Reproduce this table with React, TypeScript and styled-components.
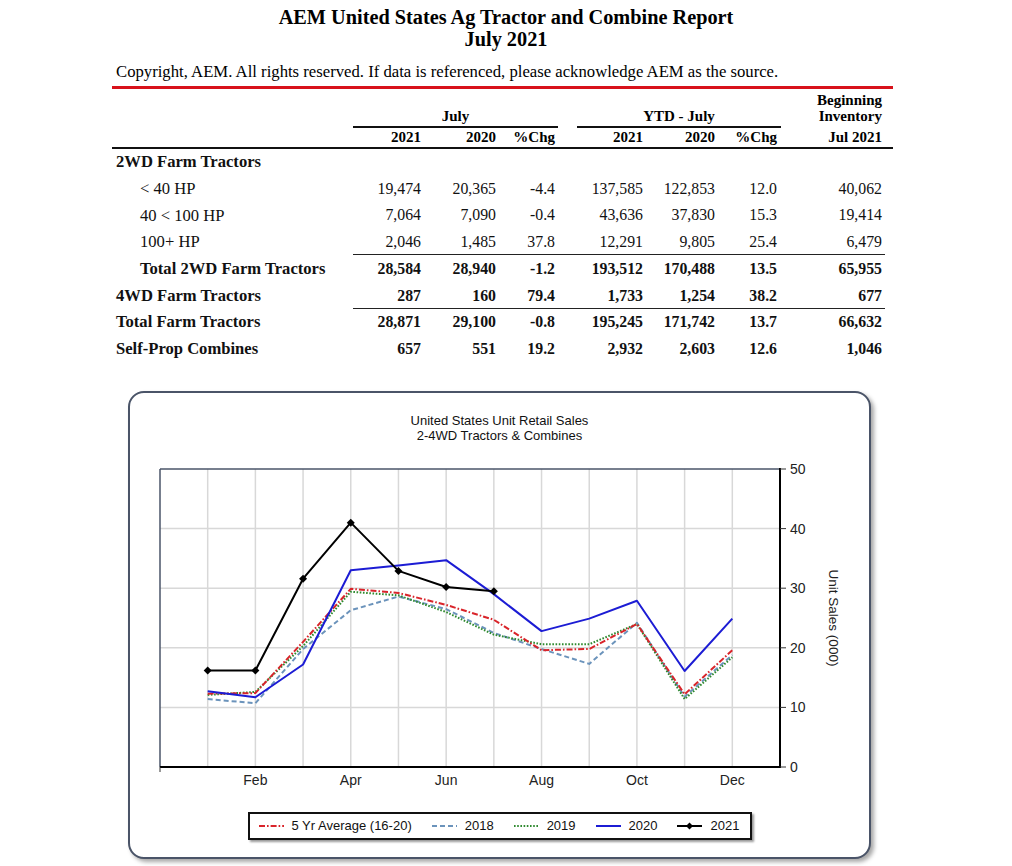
import React from "react";
import styled, { createGlobalStyle } from "styled-components";

const GlobalStyle = createGlobalStyle`
  html, body { margin: 0; padding: 0; background: #ffffff; }
  body { font-family: "Liberation Serif", "Times New Roman", serif; color: #111; }
`;

const Page = styled.div`
  width: 1012px;
  min-height: 866px;
  background: #fff;
  padding-top: 6px;
  box-sizing: border-box;
`;

const Title = styled.h1`
  margin: 0;
  text-align: center;
  font-family: "Liberation Serif", "Times New Roman", serif;
  font-weight: bold;
  font-size: 20.3px;
  line-height: 22px;
  color: #000;
`;

const Report = styled.div`
  margin-left: 112px;
  width: 781px;
`;

const Copyright = styled.p`
  margin: 13px 0 0 0;
  padding-left: 4px;
  font-size: 16.7px;
  line-height: 18px;
  color: #000;
  white-space: nowrap;
`;

const RedRule = styled.div`
  margin-top: 5px;
  height: 3px;
  background: #d8121b;
`;

const COLS = "241px 68px 75px 62px 19px 66px 72px 66px 104px 8px";
const VCOLS = "68px 75px 62px 19px 66px 72px 66px 104px";

const Header = styled.div`
  display: grid;
  grid-template-columns: ${COLS};
  grid-template-rows: auto auto;
  margin-top: 3px;
  border-bottom: 2px solid #111;
  font-weight: bold;
  font-size: 15px;
  line-height: 16px;
  color: #000;
`;

const GroupHead = styled.div<{ $col: string }>`
  grid-row: 1;
  grid-column: ${(p) => p.$col};
  align-self: end;
  text-align: center;
  padding-bottom: 2px;
  border-bottom: 2px solid #111;
`;

const InvHead = styled.div`
  grid-row: 1;
  grid-column: 9;
  align-self: end;
  text-align: right;
  padding-right: 3px;
  padding-bottom: 4px;
`;

const ColHead = styled.div<{ $col: number; $pad?: number }>`
  grid-row: 2;
  grid-column: ${(p) => p.$col};
  text-align: right;
  padding-right: ${(p) => p.$pad ?? 0}px;
  padding-top: 1px;
  padding-bottom: 2px;
`;

const Row = styled.div<{ $bold?: boolean }>`
  display: flex;
  height: 26.7px;
  font-weight: ${(p) => (p.$bold ? "bold" : "normal")};
`;

const Label = styled.div<{ $indent?: boolean; $bold?: boolean }>`
  width: 241px;
  flex: none;
  box-sizing: border-box;
  padding-left: ${(p) => (p.$indent ? 28 : 4)}px;
  font-size: 16.6px;
  font-weight: ${(p) => (p.$bold ? "bold" : "normal")};
  display: flex;
  align-items: center;
  white-space: nowrap;
`;

const Values = styled.div<{ $rule?: boolean }>`
  display: grid;
  grid-template-columns: ${VCOLS};
  width: 532px;
  box-sizing: border-box;
  border-top: ${(p) => (p.$rule ? "1.5px solid #222" : "1.5px solid transparent")};
  margin-top: -1.5px;
  font-size: 15.8px;
`;

const Cell = styled.div<{ $pad?: number }>`
  display: flex;
  align-items: center;
  justify-content: flex-end;
  padding-right: ${(p) => p.$pad ?? 0}px;
  white-space: nowrap;
`;

const ChartCard = styled.div`
  margin: 28px 0 0 128px;
  width: 743px;
  height: 468px;
  box-sizing: border-box;
  border: 2px solid #4a5468;
  border-radius: 16px;
  background: #fff;
  box-shadow: 3px 3px 4px rgba(0, 0, 0, 0.35);
  padding-top: 20px;
  display: flex;
  flex-direction: column;
  align-items: center;
  font-family: "Liberation Sans", Arial, sans-serif;
`;

const ChartTitle = styled.div`
  text-align: center;
  font-size: 13px;
  line-height: 15px;
  color: #111;
`;

const PlotSvg = styled.svg`
  display: block;
  align-self: flex-start;
  margin-top: 2px;
`;

const Legend = styled.div`
  margin-top: 17px;
  width: 504px;
  height: 28px;
  box-sizing: border-box;
  border: 2px solid #111;
  box-shadow: 2px 2px 2px rgba(0, 0, 0, 0.4);
  display: flex;
  align-items: center;
  padding-left: 9px;
  gap: 20px;
  font-size: 13px;
  color: #111;
`;

const LegendItem = styled.div`
  display: flex;
  align-items: center;
  gap: 8px;
  white-space: nowrap;
`;

type RowData = {
  label: string;
  indent?: boolean;
  bold?: boolean;
  rule?: boolean;
  vals: string[];
};

const rows: RowData[] = [
  { label: "2WD Farm Tractors", bold: true, vals: [] },
  { label: "< 40 HP", indent: true, vals: ["19,474", "20,365", "-4.4", "137,585", "122,853", "12.0", "40,062"] },
  { label: "40 < 100 HP", indent: true, vals: ["7,064", "7,090", "-0.4", "43,636", "37,830", "15.3", "19,414"] },
  { label: "100+ HP", indent: true, vals: ["2,046", "1,485", "37.8", "12,291", "9,805", "25.4", "6,479"] },
  { label: "Total 2WD Farm Tractors", indent: true, bold: true, rule: true, vals: ["28,584", "28,940", "-1.2", "193,512", "170,488", "13.5", "65,955"] },
  { label: "4WD Farm Tractors", bold: true, vals: ["287", "160", "79.4", "1,733", "1,254", "38.2", "677"] },
  { label: "Total Farm Tractors", bold: true, rule: true, vals: ["28,871", "29,100", "-0.8", "195,245", "171,742", "13.7", "66,632"] },
  { label: "Self-Prop Combines", bold: true, vals: ["657", "551", "19.2", "2,932", "2,603", "12.6", "1,046"] },
];

// Chart geometry (SVG coordinates)
const PL = 30;
const PR = 650;
const PT = 24;
const PB = 322;
const STEP = (PR - PL) / 13;
const xOf = (i: number) => PL + (i + 1) * STEP;
const yOf = (v: number) => PB - (v * (PB - PT)) / 50;

type Series = { name: string; color: string; dash?: string; data: number[]; marker?: boolean };

const series: Series[] = [
  { name: "2018", color: "#6b93bb", dash: "5 3", data: [11.4, 10.7, 19.8, 26.3, 28.6, 26.5, 22.5, 19.8, 17.3, 24.2, 11.8, 18.8] },
  { name: "2019", color: "#2f8a2f", dash: "1.6 1.6", data: [12.1, 12.6, 20.3, 29.4, 28.8, 26.0, 22.2, 20.6, 20.6, 24.0, 11.4, 18.4] },
  { name: "5 Yr Average (16-20)", color: "#d9242a", dash: "6 2 1.6 2", data: [12.3, 12.4, 21.0, 29.9, 29.2, 27.2, 24.7, 19.6, 19.8, 24.0, 12.2, 19.6] },
  { name: "2020", color: "#1c1cd4", data: [12.7, 11.7, 17.2, 33.0, 33.8, 34.7, 29.0, 22.8, 24.9, 27.9, 16.1, 24.9] },
  { name: "2021", color: "#000", data: [16.2, 16.2, 31.6, 41.0, 32.9, 30.2, 29.5], marker: true },
];

const legendOrder = ["5 Yr Average (16-20)", "2018", "2019", "2020", "2021"];

const Diamond = ({ x, y, r = 4 }: { x: number; y: number; r?: number }) => (
  <polygon points={`${x},${y - r} ${x + r},${y} ${x},${y + r} ${x - r},${y}`} fill="#000" />
);

const AXIS_FONT = "Liberation Sans, Arial, sans-serif";

const Plot = () => {
  const months = ["Feb", "Apr", "Jun", "Aug", "Oct", "Dec"];
  return (
    <PlotSvg width={739} height={350} viewBox="0 0 739 350">
      {Array.from({ length: 12 }).map((_, i) => (
        <line key={"v" + i} x1={xOf(i)} y1={PT} x2={xOf(i)} y2={PB} stroke="#d8d8d8" strokeWidth={1.5} />
      ))}
      {[10, 20, 30, 40].map((v) => (
        <line key={"h" + v} x1={PL} y1={yOf(v)} x2={PR} y2={yOf(v)} stroke="#d8d8d8" strokeWidth={1.5} />
      ))}
      <line x1={PL} y1={PT} x2={PR} y2={PT} stroke="#4a5468" strokeWidth={1.5} />
      <line x1={PL} y1={PT} x2={PL} y2={PB} stroke="#4a5468" strokeWidth={1.5} />
      <line x1={PR} y1={PT - 1} x2={PR} y2={PB + 1} stroke="#000" strokeWidth={2} />
      <line x1={PL} y1={PB} x2={PR} y2={PB} stroke="#000" strokeWidth={2} />
      <line x1={PL} y1={PB} x2={PL} y2={PB + 5} stroke="#333" strokeWidth={1} />
      {[0, 10, 20, 30, 40, 50].map((v) => (
        <g key={"t" + v}>
          <line x1={PR} y1={yOf(v)} x2={PR + 6} y2={yOf(v)} stroke="#333" strokeWidth={1} />
          <text x={PR + 10} y={yOf(v) + 5} fontSize={14} fontFamily={AXIS_FONT} fill="#222">
            {v}
          </text>
        </g>
      ))}
      <text
        x={699}
        y={173}
        fontSize={13.5}
        fontFamily={AXIS_FONT}
        fill="#222"
        textAnchor="middle"
        transform="rotate(90 699 173)"
      >
        Unit Sales (000)
      </text>
      {months.map((m, k) => (
        <text key={m} x={xOf(k * 2 + 1)} y={340} fontSize={14} fontFamily={AXIS_FONT} fill="#222" textAnchor="middle">
          {m}
        </text>
      ))}
      {series.map((s) => (
        <g key={s.name}>
          <polyline
            points={s.data.map((v, i) => `${xOf(i)},${yOf(v)}`).join(" ")}
            fill="none"
            stroke={s.color}
            strokeWidth={2}
            strokeDasharray={s.dash}
            strokeLinejoin="round"
          />
          {s.marker && s.data.map((v, i) => <Diamond key={i} x={xOf(i)} y={yOf(v)} />)}
        </g>
      ))}
    </PlotSvg>
  );
};

const Swatch = ({ s }: { s: Series }) => (
  <svg width={25} height={8} viewBox="0 0 25 8">
    <line x1={0} y1={4} x2={25} y2={4} stroke={s.color} strokeWidth={2} strokeDasharray={s.dash} />
    {s.marker && <Diamond x={12.5} y={4} r={3.5} />}
  </svg>
);

export default function App() {
  return (
    <>
      <GlobalStyle />
      <Page>
        <Title>
          AEM United States Ag Tractor and Combine Report
          <br />
          July 2021
        </Title>
        <Report>
          <Copyright>
            Copyright, AEM. All rights reserved. If data is referenced, please acknowledge AEM as the source.
          </Copyright>
          <RedRule />
          <Header>
            <GroupHead $col="2 / 5">July</GroupHead>
            <GroupHead $col="6 / 9">YTD - July</GroupHead>
            <InvHead>
              Beginning
              <br />
              Inventory
            </InvHead>
            <ColHead $col={2}>2021</ColHead>
            <ColHead $col={3}>2020</ColHead>
            <ColHead $col={4} $pad={3}>%Chg</ColHead>
            <ColHead $col={6}>2021</ColHead>
            <ColHead $col={7}>2020</ColHead>
            <ColHead $col={8} $pad={4}>%Chg</ColHead>
            <ColHead $col={9} $pad={3}>Jul 2021</ColHead>
          </Header>
          {rows.map((r) => (
            <Row key={r.label} $bold={r.bold}>
              <Label $indent={r.indent} $bold={r.bold}>{r.label}</Label>
              <Values $rule={r.rule}>
                {r.vals.length > 0 && (
                  <>
                    <Cell>{r.vals[0]}</Cell>
                    <Cell>{r.vals[1]}</Cell>
                    <Cell $pad={3}>{r.vals[2]}</Cell>
                    <Cell />
                    <Cell>{r.vals[3]}</Cell>
                    <Cell>{r.vals[4]}</Cell>
                    <Cell $pad={4}>{r.vals[5]}</Cell>
                    <Cell $pad={3}>{r.vals[6]}</Cell>
                  </>
                )}
              </Values>
            </Row>
          ))}
        </Report>
        <ChartCard>
          <ChartTitle>
            United States Unit Retail Sales
            <br />
            2-4WD Tractors &amp; Combines
          </ChartTitle>
          <Plot />
          <Legend>
            {legendOrder.map((n) => {
              const s = series.find((x) => x.name === n)!;
              return (
                <LegendItem key={n}>
                  <Swatch s={s} />
                  <span>{n}</span>
                </LegendItem>
              );
            })}
          </Legend>
        </ChartCard>
      </Page>
    </>
  );
}
